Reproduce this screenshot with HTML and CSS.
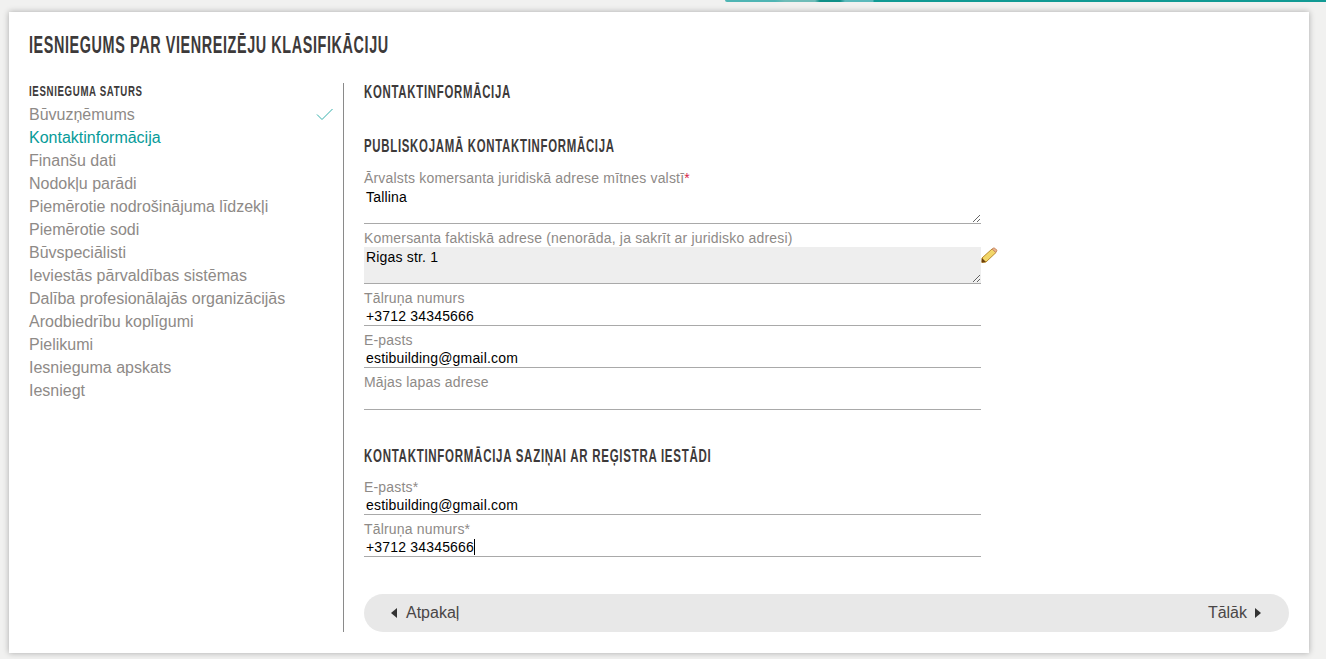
FILE: index.html
```html
<!DOCTYPE html>
<html lang="lv">
<head>
    <meta charset="UTF-8">
    <title>Iesniegums par vienreizēju klasifikāciju</title>
    <link rel="stylesheet" href="styles.css">
</head>
<body>
    <div class="top-strip"></div>
    <div class="card">
        <h1 class="page-title">Iesniegums par vienreizēju klasifikāciju</h1>
        <div class="columns">
            <div class="sidebar">
                <h4 class="side-title">Iesnieguma saturs</h4>
                <ul class="side-menu">
                    <li class="done">Būvuzņēmums
                        <svg class="check" width="18" height="13" viewBox="0 0 18 13"><path d="M1 6.500L6 11.500L16.500 1" fill="none" stroke="#35b0ac" stroke-width="1"/></svg>
                    </li>
                    <li class="active">Kontaktinformācija</li>
                    <li>Finanšu dati</li>
                    <li>Nodokļu parādi</li>
                    <li>Piemērotie nodrošinājuma līdzekļi</li>
                    <li>Piemērotie sodi</li>
                    <li>Būvspeciālisti</li>
                    <li>Ieviestās pārvaldības sistēmas</li>
                    <li>Dalība profesionālajās organizācijās</li>
                    <li>Arodbiedrību koplīgumi</li>
                    <li>Pielikumi</li>
                    <li>Iesnieguma apskats</li>
                    <li>Iesniegt</li>
                </ul>
            </div>
            <div class="content">
                <h3 class="section-title">Kontaktinformācija</h3>
                <h3 class="section-title second">Publiskojamā kontaktinformācija</h3>
                <div class="fields first-group">
                    <div class="field">
                        <label>Ārvalsts komersanta juridiskā adrese mītnes valstī<span class="req">*</span></label>
                        <textarea class="first-area">Tallina</textarea>
                    </div>
                    <div class="field">
                        <label>Komersanta faktiskā adrese (nenorāda, ja sakrīt ar juridisko adresi)</label>
                        <div class="edit-row">
                            <textarea class="changed">Rigas str. 1</textarea>
                            <svg class="pencil" width="17" height="16" viewBox="0 0 17 16">
                                <path d="M1 11L11 2L15 5.500L5 15L1 15.500Z" fill="#f2d668" stroke="#b98a2c" stroke-width="1"/>
                                <path d="M11 2L13 0.800L16 3.200L15 5.500Z" fill="#eeb48c" stroke="#c98f66" stroke-width="1"/>
                                <path d="M1 11L0.500 15.500L5 15Z" fill="#6b3f0c"/>
                            </svg>
                        </div>
                    </div>
                    <div class="field">
                        <label>Tālruņa numurs</label>
                        <input type="text" value="+3712 34345666">
                    </div>
                    <div class="field">
                        <label>E-pasts</label>
                        <input type="text" value="estibuilding@gmail.com">
                    </div>
                    <div class="field">
                        <label>Mājas lapas adrese</label>
                        <input type="text" value="">
                    </div>
                </div>
                <h3 class="section-title third">Kontaktinformācija saziņai ar reģistra iestādi</h3>
                <div class="fields">
                    <div class="field">
                        <label>E-pasts*</label>
                        <input type="text" value="estibuilding@gmail.com">
                    </div>
                    <div class="field">
                        <label>Tālruņa numurs*</label>
                        <div class="caret-input">+3712 34345666<span class="caret"></span></div>
                    </div>
                </div>
                <div class="nav-bar">
                    <a href="#" class="nav-link"><span class="arrow-left"></span>Atpakaļ</a>
                    <a href="#" class="nav-link">Tālāk<span class="arrow-right"></span></a>
                </div>
            </div>
        </div>
    </div>
</body>
</html>
```
FILE: styles.css
```css
* {
    box-sizing: border-box;
    margin: 0;
    padding: 0;
}

html, body {
    height: 100%;
    overflow: hidden;
}

body {
    font-family: "Liberation Sans", Arial, sans-serif;
    font-size: 14px;
    background-color: #f1f1f0;
}

.top-strip {
    height: 2px;
    margin-left: 725px;
    border-bottom-left-radius: 6px;
    background: linear-gradient(to right, #4fb5b4 0, #4fb5b4 50px, #6fbcb8 60px, #6fbcb8 90px, #0f8f88 95px, #0f8f88 115px, #5bb9bb 120px, #5bb9bb 148px, #119a94 149px);
}

.card {
    width: 1300px;
    height: 641px;
    margin: 10px 0 0 9px;
    padding: 20px 20px 21px;
    background-color: #fff;
    box-shadow: 0 0 6px rgba(0, 0, 0, 0.3);
}

/* no condensed font here, so the headings are squeezed sideways */
.page-title,
.side-title,
.section-title {
    font-family: "Liberation Sans", sans-serif;
    font-weight: 700;
    text-transform: uppercase;
    white-space: nowrap;
    color: #3d3a3a;
    transform-origin: left center;
}

.page-title {
    font-size: 24px;
    line-height: 26px;
    letter-spacing: 1px;
    transform: scaleX(0.6);
}

.columns {
    display: flex;
    margin-top: 25px;
    height: 549px;
}

.sidebar {
    width: 315px;
    border-right: 1px solid #8a8a8a;
    padding-right: 9px;
}

.side-title {
    font-size: 15px;
    line-height: 16px;
    letter-spacing: 1px;
    transform: scaleX(0.645);
}

.side-menu {
    list-style: none;
    margin-top: 4px;
}

.side-menu li {
    display: flex;
    justify-content: space-between;
    align-items: center;
    height: 23px;
    font-size: 16px;
    color: #8e8a87;
}

.side-menu li.active {
    color: #079b99;
}

.content {
    flex: 1;
    padding-left: 20px;
}

.section-title {
    font-size: 19px;
    line-height: 18px;
    letter-spacing: 1.2px;
    transform: scaleX(0.6);
}

.section-title.second {
    margin-top: 36px;
}

.section-title.third {
    margin-top: 37px;
    transform: scaleX(0.605);
}

.fields {
    margin-top: 14px;
    width: 617px;
}

.fields.first-group {
    margin-top: 15px;
}

.field {
    margin-bottom: 6px;
}

.field label {
    display: block;
    height: 16px;
    line-height: 16px;
    letter-spacing: 0.18px;
    color: #8e8a87;
}

.req {
    color: #d8264a;
}

.field input,
.field textarea,
.caret-input {
    display: block;
    width: 617px;
    border: none;
    border-bottom: 1px solid #a9a9a9;
    outline: none;
    padding: 0 2px;
    font-family: "Liberation Sans", Arial, sans-serif;
    font-size: 14px;
    letter-spacing: 0.18px;
    color: #000;
    background: transparent;
}

.field input,
.caret-input {
    height: 20px;
    line-height: 19px;
}

.caret-input {
    padding-top: 1px;
}

.field textarea {
    height: 37px;
    padding-top: 2px;
}

.field textarea.first-area {
    height: 38px;
    padding-top: 3px;
}

.edit-row {
    position: relative;
    width: 617px;
    padding-top: 1px;
}

.field textarea.changed {
    background-color: #eee;
}

.pencil {
    position: absolute;
    left: 617px;
    top: 1px;
}

.caret {
    display: inline-block;
    width: 1px;
    height: 16px;
    background-color: #000;
    vertical-align: -3px;
}

.nav-bar {
    display: flex;
    justify-content: space-between;
    align-items: center;
    width: 925px;
    height: 38px;
    margin-top: 37px;
    padding: 0 28px 0 27px;
    border-radius: 19px;
    background-color: #e8e8e8;
}

.nav-link {
    display: flex;
    align-items: center;
    font-size: 16px;
    color: #4a4646;
    text-decoration: none;
}

.arrow-left {
    width: 0;
    height: 0;
    margin-right: 9px;
    border-top: 5px solid transparent;
    border-bottom: 5px solid transparent;
    border-right: 6px solid #333;
}

.arrow-right {
    width: 0;
    height: 0;
    margin-left: 8px;
    border-top: 5px solid transparent;
    border-bottom: 5px solid transparent;
    border-left: 6px solid #333;
}
```
